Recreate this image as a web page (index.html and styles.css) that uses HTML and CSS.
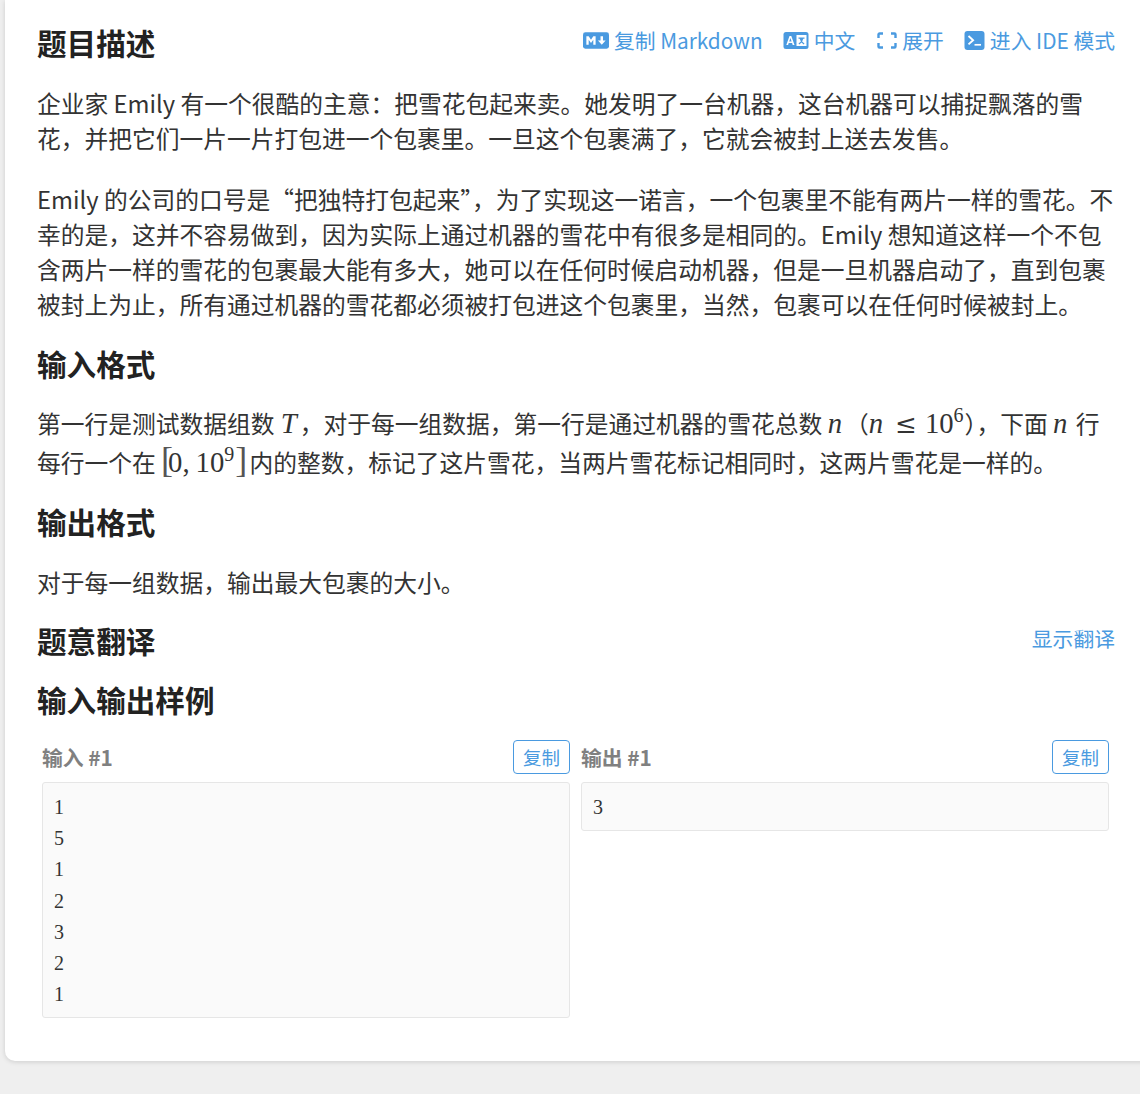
FILE: index.html
```html
<!DOCTYPE html>
<html lang="zh-CN">
<head>
<meta charset="utf-8">
<title>题目描述</title>
<link rel="stylesheet" href="styles.css">
</head>
<body>
<main class="card">
  <div class="head first">
    <h2>题目描述</h2>
    <div class="actions raised">
      <a class="act"><svg class="ic-md" viewBox="0 0 27 17"><rect width="27" height="17" rx="2.500" fill="#4a9ae0"/><path d="M3.500 13V4h2.400l2.400 3.600L10.700 4h2.400v9h-2.400V7.600L8.300 11 5.900 7.600V13z" fill="#fff"/><path d="M18.200 4h2.600v4.500h2.700L19.500 13l-4-4.500h2.700z" fill="#fff"/></svg>复制 Markdown</a>
      <a class="act"><svg class="ic-md" viewBox="0 0 25 17"><rect width="25" height="17" rx="2.500" fill="#4a9ae0"/><path d="M2.800 13 6 4h1.800L11 13H9.200l-.6-2H5.200l-.6 2zM5.700 9.500h2.400L6.900 6z" fill="#fff"/><rect x="13" y="3" width="10" height="11" fill="#fff"/><path d="M15 5.500h6v1.200h-1.200l-1.200 2.700 2.400 2.100-.8.900-2.200-2-2.200 2-.8-.9 2.400-2.100-1.200-2.700H15z" fill="#4a9ae0"/></svg>中文</a>
      <a class="act"><svg class="ic-ex" viewBox="0 0 20 17"><path d="M6 1.500H2.500a1 1 0 0 0-1 1V6M14 1.500h3.500a1 1 0 0 1 1 1V6M6 15.500H2.500a1 1 0 0 1-1-1V11M14 15.500h3.500a1 1 0 0 0 1-1V11" fill="none" stroke="#4a9ae0" stroke-width="2.400"/></svg>展开</a>
      <a class="act"><svg class="ic-tm" viewBox="0 0 20 19"><rect width="20" height="19" rx="3" fill="#4a9ae0"/><path d="M4 5l4.600 4.200L4 13.400" fill="none" stroke="#fff" stroke-width="1.900"/><path d="M10 13.800h6.500" stroke="#fff" stroke-width="1.700"/></svg>进入 IDE 模式</a>
    </div>
  </div>
  <p>企业家 Emily 有一个很酷的主意：把雪花包起来卖。她发明了一台机器，这台机器可以捕捉飘落的雪花，并把它们一片一片打包进一个包裹里。一旦这个包裹满了，它就会被封上送去发售。</p>
  <p class="next">Emily 的公司的口号是“把独特打包起来”，为了实现这一诺言，一个包裹里不能有两片一样的雪花。不幸的是，这并不容易做到，因为实际上通过机器的雪花中有很多是相同的。Emily 想知道这样一个不包含两片一样的雪花的包裹最大能有多大，她可以在任何时候启动机器，但是一旦机器启动了，直到包裹被封上为止，所有通过机器的雪花都必须被打包进这个包裹里，当然，包裹可以在任何时候被封上。</p>
  <div class="head after-text"><h2>输入格式</h2></div>
  <p class="math-p">第一行是测试数据组数 <span class="m"><i class="var-t">T</i></span>，对于每一组数据，第一行是通过机器的雪花总数 <span class="m"><i class="var-n">n</i></span>（<span class="m"><i class="var-n">n</i><span class="rel">≤</span>10<sup>6</sup></span>），下面 <span class="m"><i class="var-n">n</i></span> 行每行一个在 <span class="m"><span class="br br-l">[</span>0,<span class="thin"></span>10<sup>9</sup><span class="br br-r">]</span></span> 内的整数，标记了这片雪花，当两片雪花标记相同时，这两片雪花是一样的。</p>
  <div class="head after-math"><h2>输出格式</h2></div>
  <p>对于每一组数据，输出最大包裹的大小。</p>
  <div class="head after-short">
    <h2>题意翻译</h2>
    <a class="act raised">显示翻译</a>
  </div>
  <div class="head"><h2>输入输出样例</h2></div>
  <div class="samples">
    <section class="sample">
      <div class="sample-head"><span class="label">输入 #1</span><button class="copy">复制</button></div>
      <pre class="code">1
5
1
2
3
2
1</pre>
    </section>
    <section class="sample">
      <div class="sample-head"><span class="label">输出 #1</span><button class="copy">复制</button></div>
      <pre class="code">3</pre>
    </section>
  </div>
</main>
</body>
</html>
```
FILE: styles.css
```css
html, body {
  margin: 0;
  height: 1094px;
  overflow: hidden;
  background: #efefef;
}
body {
  font-family: "Noto Sans CJK SC", "Noto Sans", sans-serif;
  font-size: 23.75px;
  color: #333;
}
.card {
  box-sizing: border-box;
  width: 1160px;
  height: 1061px;
  margin-left: 5px;
  padding: 0 50px 0 32px;
  background: #fff;
  border-radius: 0 0 0 10px;
  box-shadow: 0 1px 5px rgba(0, 0, 0, 0.14);
}
.head {
  display: flex;
  justify-content: space-between;
  align-items: center;
  height: 44px;
  margin-top: 15px;
}
.head.first {
  margin-top: 0;
  padding-top: 21px;
}
.head.after-text { margin-top: 21px; }
.head.after-math { margin-top: 19px; }
.head.after-short { margin-top: 20px; }
h2 {
  margin: 0;
  font-size: 29.6px;
  line-height: 44px;
  font-weight: 700;
  color: #222;
}
.actions {
  display: flex;
  gap: 20px;
  align-items: center;
}
.raised { padding-bottom: 6px; }
.act {
  display: flex;
  align-items: center;
  font-size: 20.8px;
  line-height: 30px;
  color: #4a9ae0;
  white-space: pre;
}
.ic-md { width: 26px; height: 17px; margin-right: 5px; }
.ic-ex { width: 20px; height: 17px; margin: 0 5px 0 2px; }
.ic-tm { width: 21px; height: 19px; margin-right: 5px; }
p {
  margin: 20px 0 0;
  line-height: 35px;
}
p.next { margin-top: 26px; }
p.math-p {
  line-height: 39px;
  margin-top: 17px;
}
.m {
  font-family: "Liberation Serif", serif;
  font-size: 28.7px;
  line-height: 0;
}
.var-t { padding: 0 3px 0 1px; }
.var-n { padding-right: 3px; }
.rel {
  font-family: "DejaVu Serif", serif;
  margin: 0 8px 0 9px;
  font-size: 26px;
}
.thin { margin-left: 6px; }
.br {
  font-size: 36px;
  font-weight: 400;
  line-height: 0;
  color: #555;
}
.br-l { letter-spacing: -5px; }
.br-r { letter-spacing: -3px; }
sup {
  font-size: 20px;
  line-height: 0;
  margin-right: 1px;
}
.samples {
  display: grid;
  grid-template-columns: 528px 528px;
  column-gap: 11px;
  margin: 18px 0 0 5px;
  align-items: start;
}
.sample-head {
  display: flex;
  justify-content: space-between;
  align-items: center;
  height: 34px;
}
.label {
  font-size: 20.8px;
  font-weight: 700;
  color: #808080;
}
.copy {
  box-sizing: border-box;
  width: 57px;
  height: 34px;
  padding: 0;
  background: #fff;
  border: 1px solid #4a9ae0;
  border-radius: 4px;
  color: #4a9ae0;
  font-family: "Noto Sans CJK SC", sans-serif;
  font-size: 18.5px;
}
.code {
  margin: 8px 0 0;
  padding: 9px 11px 7px;
  background: #fafafa;
  border: 1px solid #e6e6e6;
  border-radius: 3px;
  font-family: "Liberation Serif", serif;
  font-size: 20px;
  line-height: 31.2px;
  color: #333;
}
```
